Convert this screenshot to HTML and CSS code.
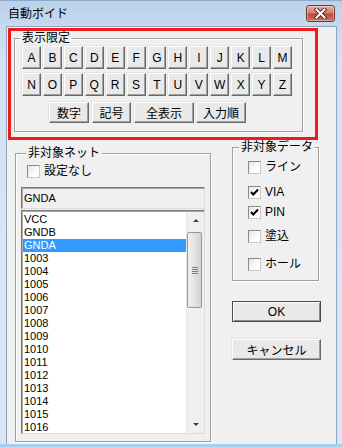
FILE: index.html
```html
<!DOCTYPE html>
<html lang="ja">
<head>
    <meta charset="UTF-8">
    <meta name="viewport" content="width=device-width, initial-scale=1.0">
    <title>自動ボイド</title>
    <link rel="stylesheet" href="styles.css">
</head>
<body>
    <div class="window">
        <div class="titlebar">
            <span class="title">自動ボイド</span>
            <button class="close">
                <svg width="13" height="11" viewBox="0 0 13 11">
                    <path d="M2.5 1.5 L10.5 9.5 M10.5 1.5 L2.5 9.5" stroke="#5a2520" stroke-width="4" stroke-linecap="square"/>
                    <path d="M2.5 1.5 L10.5 9.5 M10.5 1.5 L2.5 9.5" stroke="#fff" stroke-width="2" stroke-linecap="square"/>
                </svg>
            </button>
        </div>

        <div class="client">
            <div class="marker">
                <fieldset class="group filter">
                    <legend>表示限定</legend>
                    <div class="letters">
                        <button class="btn">A</button><button class="btn">B</button><button class="btn">C</button>
                        <button class="btn">D</button><button class="btn">E</button><button class="btn">F</button>
                        <button class="btn">G</button><button class="btn">H</button><button class="btn">I</button>
                        <button class="btn">J</button><button class="btn">K</button><button class="btn">L</button>
                        <button class="btn">M</button>
                        <button class="btn">N</button><button class="btn">O</button><button class="btn">P</button>
                        <button class="btn">Q</button><button class="btn">R</button><button class="btn">S</button>
                        <button class="btn">T</button><button class="btn">U</button><button class="btn">V</button>
                        <button class="btn">W</button><button class="btn">X</button><button class="btn">Y</button>
                        <button class="btn">Z</button>
                    </div>
                    <div class="extra">
                        <button class="btn w-num">数字</button>
                        <button class="btn w-sym">記号</button>
                        <button class="btn w-all">全表示</button>
                        <button class="btn w-ord">入力順</button>
                    </div>
                </fieldset>
            </div>

            <div class="lower">
                <fieldset class="group nets">
                    <legend>非対象ネット</legend>
                    <label class="check none"><span class="box"></span>設定なし</label>
                    <div class="field">GNDA</div>
                    <div class="listbox">
                        <ul class="items">
                            <li>VCC</li>
                            <li>GNDB</li>
                            <li class="selected">GNDA</li>
                            <li>1003</li>
                            <li>1004</li>
                            <li>1005</li>
                            <li>1006</li>
                            <li>1007</li>
                            <li>1008</li>
                            <li>1009</li>
                            <li>1010</li>
                            <li>1011</li>
                            <li>1012</li>
                            <li>1013</li>
                            <li>1014</li>
                            <li>1015</li>
                            <li>1016</li>
                        </ul>
                        <div class="scrollbar">
                            <div class="arrow up"></div>
                            <div class="track">
                                <div class="thumb"><span class="grip"></span></div>
                            </div>
                            <div class="arrow down"></div>
                        </div>
                    </div>
                </fieldset>

                <div class="side">
                    <fieldset class="group data">
                        <legend>非対象データ</legend>
                        <div class="checks">
                            <label class="check r1"><span class="box"></span>ライン</label>
                            <label class="check r2"><span class="box"><svg width="11" height="11" viewBox="0 0 11 11"><path d="M2 5 L4.3 7.5 L9 2.5" fill="none" stroke="#000" stroke-width="2"/></svg></span>VIA</label>
                            <label class="check r3"><span class="box"><svg width="11" height="11" viewBox="0 0 11 11"><path d="M2 5 L4.3 7.5 L9 2.5" fill="none" stroke="#000" stroke-width="2"/></svg></span>PIN</label>
                            <label class="check r4"><span class="box"></span>塗込</label>
                            <label class="check r5"><span class="box"></span>ホール</label>
                        </div>
                    </fieldset>
                    <button class="btn action default">OK</button>
                    <button class="btn action cancel">キャンセル</button>
                </div>
            </div>
        </div>
    </div>
</body>
</html>
```

FILE: styles.css
```css
body {
    margin: 0;
    font-family: "Liberation Sans", "Noto Sans CJK JP", sans-serif;
    font-size: 12px;
    color: #000;
    background-color: #fff;
}
.window {
    width: 342px;
    height: 447px;
    box-sizing: border-box;
    background: linear-gradient(#bcd2ea, #d4e3f3 60px, #d9e6f4);
    border-top: 1px solid #8ba7c9;
    border-bottom: 3px solid #a9cfee;
    display: flex;
    flex-direction: column;
}
.titlebar {
    height: 25px;
    display: flex;
    align-items: flex-start;
    justify-content: space-between;
    padding: 0 7px 0 8px;
}
.title {
    margin-top: 6px;
    line-height: 14px;
}
.close {
    margin-top: 4px;
    width: 29px;
    height: 17px;
    padding: 0;
    border: 1px solid #6e3a35;
    border-radius: 3px;
    background: linear-gradient(#e6b1a8, #d27c6f 45%, #c14a3c 55%, #d2705f);
    box-shadow: inset 0 0 0 1px rgba(255, 255, 255, 0.35);
    display: flex;
    align-items: center;
    justify-content: center;
}
.client {
    flex: 1;
    margin: 0 5px 0 6px;
    border: 1px solid #8fa3bc;
    border-bottom: none;
    background-color: #f0f0f0;
}
.marker {
    width: 304px;
    margin: 1px 0 0 1px;
    border: 3px solid #ec1c1c;
}

/* group boxes */
.group {
    margin: 0;
    padding: 0;
    border: 1px solid #a0a0a0;
    box-shadow: 1px 1px 0 #fff, inset 1px 1px 0 #fff;
    min-width: 0;
}
.group legend {
    margin-left: 5px;
    padding: 0 2px;
    line-height: 12px;
    white-space: nowrap;
    background-color: #f0f0f0;
}

.filter {
    width: 289px;
    box-sizing: border-box;
    margin: 1px 0 5px 3px;
    padding: 2px 10px 8px 7px;
}
.filter legend {
    margin-left: -2px;
}
.letters {
    display: grid;
    grid-template-columns: repeat(13, 1fr);
    grid-auto-rows: 23px;
    gap: 4px 2px;
}
.extra {
    display: flex;
    height: 21px;
    margin: 6px 0 0 27px;
}

/* buttons */
.btn {
    font-family: inherit;
    font-size: 12px;
    padding: 0;
    margin: 0;
    color: #000;
    background-color: #e9e9e9;
    border: 1px solid;
    border-color: #fff #696969 #696969 #fff;
    box-shadow: inset -1px -1px 0 #a0a0a0, -1px -1px 0 #e3e3e3;
}
.w-num { width: 40px; }
.w-sym { width: 39px; margin-left: 3px; }
.w-all { width: 60px; margin-left: 3px; }
.w-ord { width: 50px; margin-left: 2px; }

.lower {
    display: flex;
    align-items: flex-start;
}
.nets {
    width: 196px;
    box-sizing: border-box;
    margin: 7px 0 0 8px;
    padding: 0 5px 7px 5px;
    display: flex;
    flex-direction: column;
}
.side {
    width: 89px;
    margin: 1px 0 0 21px;
    display: flex;
    flex-direction: column;
    align-items: flex-start;
}
.data {
    width: 87px;
    box-sizing: border-box;
}
.data legend {
    margin-left: 6px;
}
.checks {
    padding: 0 0 9px 15px;
}

/* checkboxes */
.check {
    display: flex;
    align-items: center;
    height: 14px;
    line-height: 14px;
}
.box {
    width: 13px;
    height: 13px;
    box-sizing: border-box;
    margin-right: 4px;
    border: 1px solid;
    border-color: #8a8a8a #c8c8c8 #c8c8c8 #8a8a8a;
    background: linear-gradient(135deg, #e6e6e6, #fff 70%);
    display: flex;
    align-items: center;
    justify-content: center;
}
.none { margin: 5px 0 0 6px; }
.r1 { margin-top: 7px; }
.r2 { margin-top: 11px; }
.r3 { margin-top: 6px; }
.r4 { margin-top: 10px; }
.r5 { margin-top: 14px; }

.field {
    margin-top: 9px;
    height: 22px;
    box-sizing: border-box;
    border: 1px solid;
    border-color: #7a7a7a #dcdcdc #dcdcdc #7a7a7a;
    box-shadow: inset 1px 1px 0 #a8a8a8;
    padding: 3px 0 0 2px;
    font-size: 11px;
    line-height: 14px;
    background-color: #f0f0f0;
}
.listbox {
    margin-top: 1px;
    height: 224px;
    box-sizing: border-box;
    border: 1px solid;
    border-color: #7a7a7a #dcdcdc #dcdcdc #7a7a7a;
    box-shadow: inset 1px 1px 0 #a8a8a8;
    padding: 1px 0 0 1px;
    background-color: #fff;
    display: flex;
    overflow: hidden;
}
.items {
    flex: 1;
    list-style: none;
    margin: 0;
    padding: 1px 0 0 0;
    font-size: 11px;
    overflow: hidden;
}
.items li {
    height: 13px;
    line-height: 13px;
    padding-left: 1px;
}
.items .selected {
    background-color: #3399ff;
    color: #fff;
}

/* scrollbar */
.scrollbar {
    width: 17px;
    background-color: #f0f0f0;
    border-left: 1px solid #e6e6e6;
    display: flex;
    flex-direction: column;
}
.arrow {
    height: 17px;
    display: flex;
    align-items: center;
    justify-content: center;
}
.arrow::before {
    content: "";
    border-left: 3px solid transparent;
    border-right: 3px solid transparent;
}
.arrow.up::before { border-bottom: 3px solid #404040; }
.arrow.down::before { border-top: 3px solid #404040; }
.track {
    flex: 1;
    padding-top: 3px;
}
.thumb {
    width: 15px;
    height: 76px;
    box-sizing: border-box;
    border: 1px solid #979797;
    border-radius: 2px;
    background: linear-gradient(to right, #f2f2f2, #e3e3e3 50%, #d2d2d2);
    display: flex;
    align-items: center;
    justify-content: center;
}
.grip {
    width: 6px;
    height: 7px;
    background: repeating-linear-gradient(#7d7d7d 0 1px, transparent 1px 2px);
}

.action {
    width: 89px;
    height: 21px;
}
.default {
    margin-top: 20px;
    border: 1px solid #4a4a4a;
    box-shadow: inset 1px 1px 0 #fff, inset -1px -1px 0 #8a8a8a;
}
.cancel {
    margin-top: 17px;
}
```
